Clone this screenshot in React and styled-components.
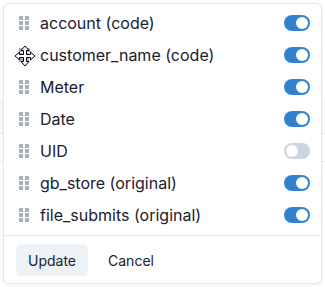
import React, { useState } from 'react';
import styled, { createGlobalStyle } from 'styled-components';

const Global = createGlobalStyle`
  html, body {
    margin: 0;
    background: #fff;
    font-family: Inter, "Noto Sans", sans-serif;
    color: #1a202c;
  }
`;

const Page = styled.div`
  position: relative;
  width: 325px;
  height: 287px;
  overflow: hidden;
  padding: 3px 0 0 3px;
  box-sizing: border-box;
`;

const Backdrop = styled.div`
  position: absolute;
  left: 0;
  right: 0;
  top: ${p => p.$top}px;
  height: ${p => p.$h}px;
  background: ${p => p.$bg || 'transparent'};
  border-bottom: 1px solid #e6ebf1;
`;

const Popover = styled.div`
  position: relative;
  width: 319px;
  height: 281px;
  box-sizing: border-box;
  background: #fff;
  border: 1px solid #e2e8f0;
  border-radius: 6px;
  box-shadow: 0 1px 3px rgba(0, 0, 0, 0.06);
  display: flex;
  flex-direction: column;
`;

const List = styled.div`
  padding: 3px 0 4px;
  flex: 1;
`;

const Row = styled.div`
  position: relative;
  height: 32px;
  display: flex;
  align-items: center;
  padding: 0 11px 0 15px;
`;

const Handle = styled.div`
  display: grid;
  grid-template-columns: 4px 4px;
  column-gap: 2px;
  row-gap: 1px;
  margin-right: 11px;

  span {
    width: 4px;
    height: 4px;
    background: #a6afbd;
  }
`;

const Label = styled.span`
  flex: 1;
  font-size: 16px;
  line-height: 20px;
`;

const Track = styled.button`
  width: 26px;
  height: 16px;
  padding: 2px;
  border: 0;
  border-radius: 8px;
  background: ${p => (p.$on ? '#3182ce' : '#cbd5e0')};
  display: flex;
  justify-content: ${p => (p.$on ? 'flex-end' : 'flex-start')};
  cursor: pointer;
`;

const Thumb = styled.span`
  width: 12px;
  height: 12px;
  border-radius: 50%;
  background: #fff;
`;

const Footer = styled.div`
  border-top: 1px solid #e2e8f0;
  padding: 8px 12px;
  display: flex;
  gap: 8px;
`;

const Button = styled.button`
  height: 32px;
  padding: 0 12px;
  border: 0;
  border-radius: 6px;
  background: ${p => (p.$solid ? '#edf2f7' : 'transparent')};
  font-family: inherit;
  font-size: 14px;
  color: #1a202c;
  cursor: pointer;
`;

const MoveCursor = styled.svg`
  position: absolute;
  left: 10px;
  top: 6px;
  pointer-events: none;
`;

const columns = [
  { name: 'account (code)', on: true },
  { name: 'customer_name (code)', on: true, hover: true },
  { name: 'Meter', on: true },
  { name: 'Date', on: true },
  { name: 'UID', on: false },
  { name: 'gb_store (original)', on: true },
  { name: 'file_submits (original)', on: true },
];

function Cursor() {
  return (
    <MoveCursor width="22" height="22" viewBox="0 0 22 22">
      <path
        d="M14 3 L16 3 L16 7 L14 7 Z"
        fill="#9aa4b2"
      />
      <path
        d="M11 1 L15 5.5 H12.5 V9.5 H16.5 V7 L21 11 L16.5 15 V12.5 H12.5 V16.5 H15 L11 21 L7 16.5 H9.5 V12.5 H5.5 V15 L1 11 L5.5 7 V9.5 H9.5 V5.5 H7 Z"
        fill="#fff"
        stroke="#000"
        strokeWidth="1"
        strokeLinejoin="miter"
      />
    </MoveCursor>
  );
}

export default function App() {
  const [items, setItems] = useState(columns);
  const toggle = i =>
    setItems(items.map((c, j) => (j === i ? { ...c, on: !c.on } : c)));

  return (
    <>
      <Global />
      <Page>
        <Backdrop $top={100} $h={33} $bg="#f7f9fb" />
        <Backdrop $top={130} $h={31} />
        <Popover>
          <List>
            {items.map((c, i) => (
              <Row key={c.name}>
                <Handle>
                  {Array.from({ length: 6 }).map((_, k) => (
                    <span key={k} />
                  ))}
                </Handle>
                <Label>{c.name}</Label>
                <Track $on={c.on} onClick={() => toggle(i)}>
                  <Thumb />
                </Track>
                {c.hover && <Cursor />}
              </Row>
            ))}
          </List>
          <Footer>
            <Button $solid>Update</Button>
            <Button>Cancel</Button>
          </Footer>
        </Popover>
      </Page>
    </>
  );
}
